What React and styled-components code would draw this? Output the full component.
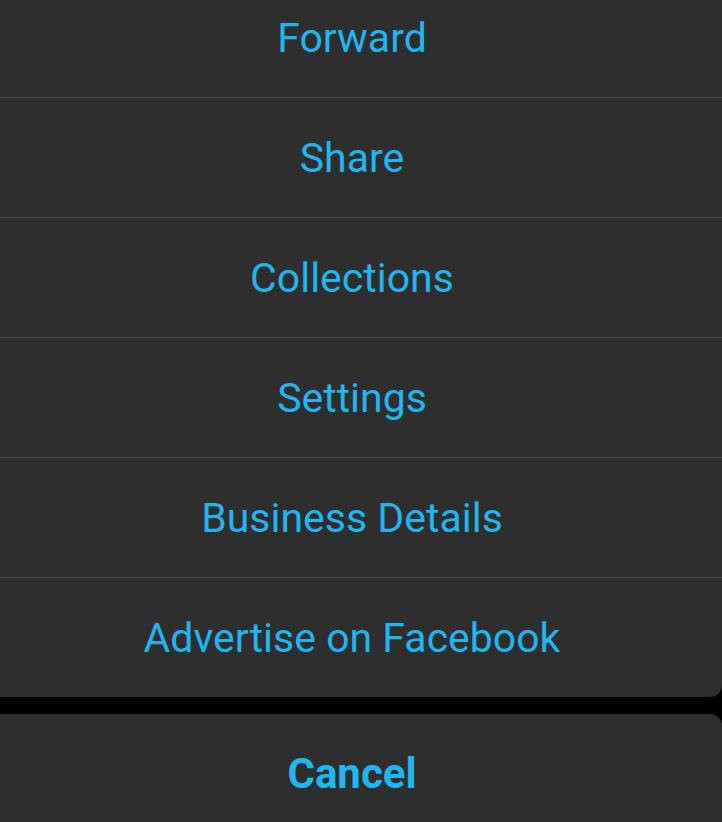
import React from "react";
import styled, { createGlobalStyle } from "styled-components";

const Global = createGlobalStyle`
  html, body { margin: 0; padding: 0; background: #000; overflow: hidden; }
  body { font-family: Roboto, "Noto Sans", "Liberation Sans", sans-serif; }
`;

const Page = styled.div`
  width: 722px;
  height: 822px;
  overflow: hidden;
  background: #000;
`;

const Group = styled.div`
  width: 740px;
  margin-left: -18px;
  margin-top: ${(p) => p.$top || 0}px;
  background: #2e2e2e;
  border-radius: 12px;
  overflow: hidden;
  display: flex;
  flex-direction: column;
`;

const Item = styled.div`
  height: 119px;
  display: flex;
  align-items: center;
  justify-content: center;
  color: #22b6f1;
  font-size: ${(p) => (p.$bold ? 42 : 41)}px;
  font-weight: ${(p) => (p.$bold ? 700 : 400)};
  & + & { border-top: 1px solid #4d4d4d; }
`;

const Gap = styled.div`
  height: 17px;
`;

const items = [
  "Forward",
  "Share",
  "Collections",
  "Settings",
  "Business Details",
  "Advertise on Facebook",
];

export default function App() {
  return (
    <Page>
      <Global />
      <Group $top={-22}>
        {items.map((t) => (
          <Item key={t}>{t}</Item>
        ))}
      </Group>
      <Gap />
      <Group>
        <Item $bold>Cancel</Item>
      </Group>
    </Page>
  );
}
